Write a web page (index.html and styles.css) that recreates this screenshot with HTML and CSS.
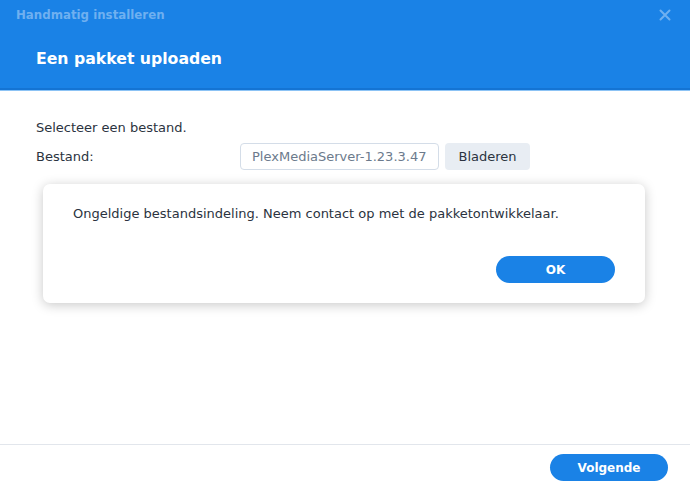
FILE: index.html
```html
<!DOCTYPE html>
<html>
<head>
<meta charset="utf-8">
<link rel="stylesheet" href="styles.css">
</head>
<body>
<div class="window">
  <header class="header">
    <div class="topbar">
      <span class="wtitle">Handmatig installeren</span>
      <span class="close">
        <svg width="12" height="12" viewBox="0 0 12 12"><path d="M1.5 1.5L10.5 10.5M10.5 1.5L1.5 10.5" stroke="#6fb0f0" stroke-width="2" stroke-linecap="round"/></svg>
      </span>
    </div>
    <h1 class="step">Een pakket uploaden</h1>
  </header>
  <main class="body">
    <p class="intro">Selecteer een bestand.</p>
    <div class="row">
      <label class="label">Bestand:</label>
      <div class="field">PlexMediaServer-1.23.3.47</div>
      <button class="browse">Bladeren</button>
    </div>
    <div class="dialog">
      <p class="msg">Ongeldige bestandsindeling. Neem contact op met de pakketontwikkelaar.</p>
      <div class="dialog-actions">
        <button class="primary ok">OK</button>
      </div>
    </div>
  </main>
  <footer class="footer">
    <button class="primary next">Volgende</button>
  </footer>
</div>
</body>
</html>
```
FILE: styles.css
```css
* { box-sizing: border-box; }
html, body { margin: 0; padding: 0; }
body {
  width: 690px;
  height: 489px;
  font-family: "DejaVu Sans", Verdana, sans-serif;
  color: #2b3340;
  background: #fff;
  overflow: hidden;
}
.window {
  display: flex;
  flex-direction: column;
  height: 489px;
}
.header {
  background: #1a82e6;
  height: 90px;
  border-bottom: 2px solid #1474d4;
  box-shadow: 0 1px 0 #8cc3f5;
  padding: 0 16px 0 16px;
}
.topbar {
  display: flex;
  justify-content: space-between;
  align-items: center;
  height: 30px;
}
.wtitle {
  color: #6fb0f0;
  font-weight: bold;
  font-size: 11.8px;
}
.close { display: flex; margin-right: 3px; }
.step {
  margin: 19px 0 0 20px;
  color: #fff;
  font-size: 15.7px;
  line-height: 20px;
  font-weight: bold;
}
.body {
  flex: 1;
  padding: 30px 36px 0 36px;
  position: relative;
}
.intro {
  margin: 0;
  font-size: 13px;
  line-height: 16px;
}
.row {
  display: flex;
  align-items: center;
  margin-top: 6px;
  height: 28px;
}
.label {
  font-size: 13px;
  width: 204px;
}
.field {
  width: 199px;
  height: 27px;
  border: 1px solid #d4dde8;
  border-radius: 4px;
  color: #6c7a8c;
  font-size: 13px;
  line-height: 25px;
  padding-left: 11px;
  white-space: nowrap;
  overflow: hidden;
}
.browse {
  margin-left: 6px;
  width: 85px;
  height: 27px;
  border: none;
  border-radius: 4px;
  background: #e8edf3;
  color: #2b3340;
  font-family: inherit;
  font-size: 13px;
}
.dialog {
  position: absolute;
  left: 43px;
  top: 94px;
  width: 602px;
  height: 119px;
  background: #fff;
  border-radius: 7px;
  box-shadow: 0 2px 12px rgba(0,0,0,0.22);
  padding: 22px 30px 0 30px;
}
.msg {
  margin: 0;
  font-size: 13px;
  line-height: 16px;
}
.dialog-actions {
  display: flex;
  justify-content: flex-end;
  margin-top: 34px;
}
.primary {
  border: none;
  background: #1a82e6;
  color: #fff;
  font-family: inherit;
  font-weight: bold;
  font-size: 12px;
  border-radius: 14px;
  height: 27px;
}
.ok { width: 119px; }
.footer {
  height: 45px;
  border-top: 1px solid #e2e6ec;
  display: flex;
  justify-content: flex-end;
  align-items: flex-start;
  padding: 9px 22px 0 0;
}
.next { width: 118px; }
```
